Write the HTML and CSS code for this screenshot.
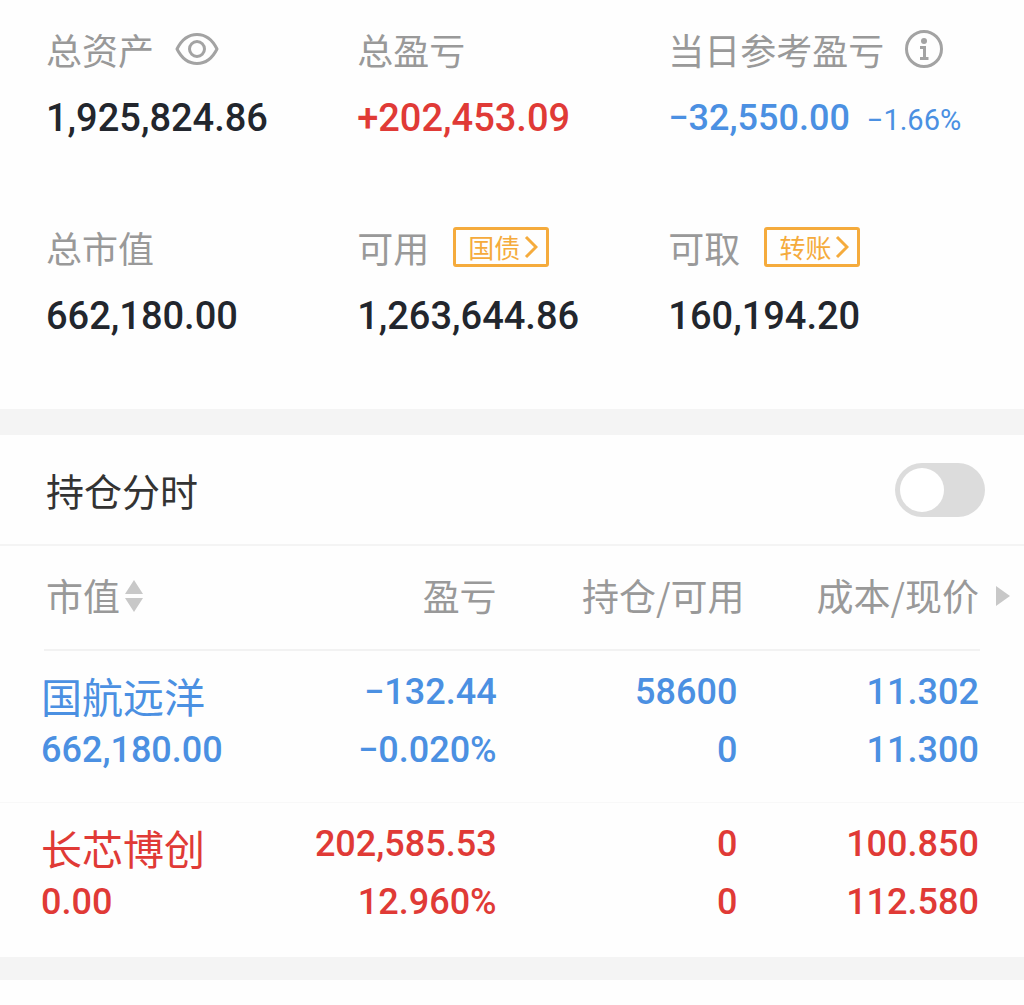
FILE: index.html
```html
<!DOCTYPE html>
<html lang="zh-CN">
<head>
  <meta charset="utf-8">
  <meta name="viewport" content="width=device-width, initial-scale=1">
  <title>持仓</title>
  <link rel="stylesheet" href="styles.css">
</head>
<body>
  <section class="summary">
    <div class="item">
      <div class="label">总资产
        <button class="icon-btn" aria-label="隐藏金额">
          <svg width="44" height="34" viewBox="0 0 44 34" fill="none" stroke="#a3a3a3" stroke-width="3">
            <path d="M2 17C7 7 14 2.500 22 2.500S37 7 42 17C37 27 30 31.500 22 31.500S7 27 2 17Z" stroke-linejoin="round"/>
            <circle cx="22" cy="17" r="7.500"/>
          </svg>
        </button>
      </div>
      <div class="value">1,925,824.86</div>
    </div>
    <div class="item">
      <div class="label">总盈亏</div>
      <div class="value up">+202,453.09</div>
    </div>
    <div class="item">
      <div class="label">当日参考盈亏
        <button class="icon-btn" aria-label="说明">
          <svg width="38" height="38" viewBox="1 1 38 38" fill="none" stroke="#a3a3a3" stroke-width="3">
            <circle cx="20" cy="20" r="17.500"/>
            <circle cx="20" cy="12" r="3" fill="#a3a3a3" stroke="none"/>
            <path d="M16 18.500H20.500V29M16 29.500H24.500"/>
          </svg>
        </button>
      </div>
      <div class="value day down">−32,550.00 <small>−1.66%</small></div>
    </div>
    <div class="item">
      <div class="label">总市值</div>
      <div class="value">662,180.00</div>
    </div>
    <div class="item">
      <div class="label">可用
        <button class="tag">国债<svg width="14" height="24" viewBox="0 0 14 24" fill="none" stroke="#f5ab3c" stroke-width="3"><path d="M2 2L12 12L2 22"/></svg></button>
      </div>
      <div class="value">1,263,644.86</div>
    </div>
    <div class="item">
      <div class="label">可取
        <button class="tag">转账<svg width="14" height="24" viewBox="0 0 14 24" fill="none" stroke="#f5ab3c" stroke-width="3"><path d="M2 2L12 12L2 22"/></svg></button>
      </div>
      <div class="value">160,194.20</div>
    </div>
  </section>

  <section class="holdings">
    <div class="switch-row">
      <label for="minute">持仓分时</label>
      <input type="checkbox" id="minute" class="switch">
    </div>
    <table>
      <colgroup>
        <col class="col-name">
        <col class="col-profit">
        <col class="col-count">
        <col class="col-price">
        <col class="col-more">
      </colgroup>
      <thead>
        <tr>
          <th>市值<svg class="sort" width="18" height="32" viewBox="0 0 18 32" fill="#c8c8c8"><path d="M9 0L18 14H0ZM0 18H18L9 32Z"/></svg></th>
          <th>盈亏</th>
          <th>持仓/可用</th>
          <th>成本/现价</th>
          <th><svg class="more" width="14" height="20" viewBox="0 0 14 20" fill="#c8c8c8"><path d="M0 0L14 10L0 20Z"/></svg></th>
        </tr>
      </thead>
      <tbody>
        <tr class="down">
          <td><span class="name">国航远洋</span><span class="amount">662,180.00</span></td>
          <td><span>−132.44</span><span>−0.020%</span></td>
          <td><span>58600</span><span>0</span></td>
          <td><span>11.302</span><span>11.300</span></td>
          <td></td>
        </tr>
        <tr class="up">
          <td><span class="name">长芯博创</span><span class="amount">0.00</span></td>
          <td><span>202,585.53</span><span>12.960%</span></td>
          <td><span>0</span><span>0</span></td>
          <td><span>100.850</span><span>112.580</span></td>
          <td></td>
        </tr>
      </tbody>
    </table>
  </section>
</body>
</html>
```
FILE: styles.css
```css
body {
  margin: 0;
  background-color: #fefefe;
  color: #22262d;
  font-family: Roboto, "Noto Sans CJK SC", sans-serif;
}
button {
  padding: 0;
  border: none;
  background: none;
  font-family: inherit;
  cursor: pointer;
}
.up {
  color: #e03a36;
}
.down {
  color: #4b90e2;
}

.summary {
  display: grid;
  grid-template-columns: 7fr 7fr 8fr;
  row-gap: 60px;
  padding: 15px 0 58px 46px;
  border-bottom: 26px solid #f4f4f4;
}
.label {
  display: flex;
  align-items: center;
  height: 68px;
  color: #999;
  font-family: "Noto Sans CJK SC", sans-serif;
  font-size: 36px;
  line-height: 68px;
  white-space: nowrap;
}
.icon-btn {
  display: flex;
  margin-left: 21px;
}
.value {
  height: 70px;
  font-size: 38px;
  font-weight: 500;
  line-height: 70px;
  white-space: nowrap;
}
.value.day {
  font-size: 36px;
}
.value small {
  margin-left: 8px;
  font-size: 29px;
  font-weight: 400;
}
.tag {
  display: flex;
  align-items: center;
  gap: 4px;
  box-sizing: border-box;
  height: 40px;
  margin-left: 24px;
  padding: 0 8px 0 12px;
  border: 3px solid #f5ab3c;
  border-radius: 3px;
  color: #f5ab3c;
  font-family: "Noto Sans CJK SC", sans-serif;
  font-size: 26px;
  line-height: 34px;
}

.holdings {
  border-bottom: 23px solid #f4f4f4;
}
.switch-row {
  display: flex;
  align-items: center;
  justify-content: space-between;
  height: 109px;
  padding: 0 39px 0 46px;
  border-bottom: 2px solid #f4f4f4;
  color: #333;
  font-family: "Noto Sans CJK SC", sans-serif;
  font-size: 38px;
}
.switch {
  appearance: none;
  width: 90px;
  height: 54px;
  margin: 0;
  padding: 5px;
  border-radius: 27px;
  background-color: #dcdcdc;
  cursor: pointer;
}
.switch::before {
  content: "";
  display: block;
  width: 44px;
  height: 44px;
  border-radius: 50%;
  background-color: #fff;
}
.switch:checked {
  background-color: #4b90e2;
}
.switch:checked::before {
  margin-left: auto;
}

table {
  width: 100%;
  border-collapse: collapse;
  table-layout: fixed;
}
.col-name {
  width: 28%;
}
.col-profit {
  width: 20.5%;
}
.col-count {
  width: 24.2%;
}
.col-price {
  width: 22.9%;
}
th {
  height: 97px;
  padding: 0 0 8px;
  color: #999;
  font-family: "Noto Sans CJK SC", sans-serif;
  font-size: 37px;
  font-weight: 400;
  text-align: right;
  white-space: nowrap;
}
thead tr {
  background: linear-gradient(#f2f2f2, #f2f2f2) 44px bottom / calc(100% - 88px) 2px no-repeat;
}
th:first-child {
  padding-left: 46px;
  text-align: left;
}
th:last-child {
  padding-left: 17px;
  text-align: left;
}
.sort {
  margin-left: 5px;
  vertical-align: -1px;
}
.more {
  vertical-align: 5px;
}
td {
  padding: 12px 0 23px;
  font-size: 36px;
  font-weight: 500;
  line-height: 58px;
  text-align: right;
  vertical-align: top;
  white-space: nowrap;
}
td span {
  display: block;
}
td:first-child {
  padding-left: 41px;
  text-align: left;
}
td:nth-child(3) {
  padding-right: 7px;
}
tbody tr + tr {
  border-top: 1px solid #f8f8f8;
}
tbody tr:last-child td {
  padding-bottom: 26px;
}
.name {
  font-family: "Noto Sans CJK SC", sans-serif;
  font-size: 41px;
  font-weight: 400;
  line-height: 64px;
}
.amount {
  line-height: 46px;
}
```
